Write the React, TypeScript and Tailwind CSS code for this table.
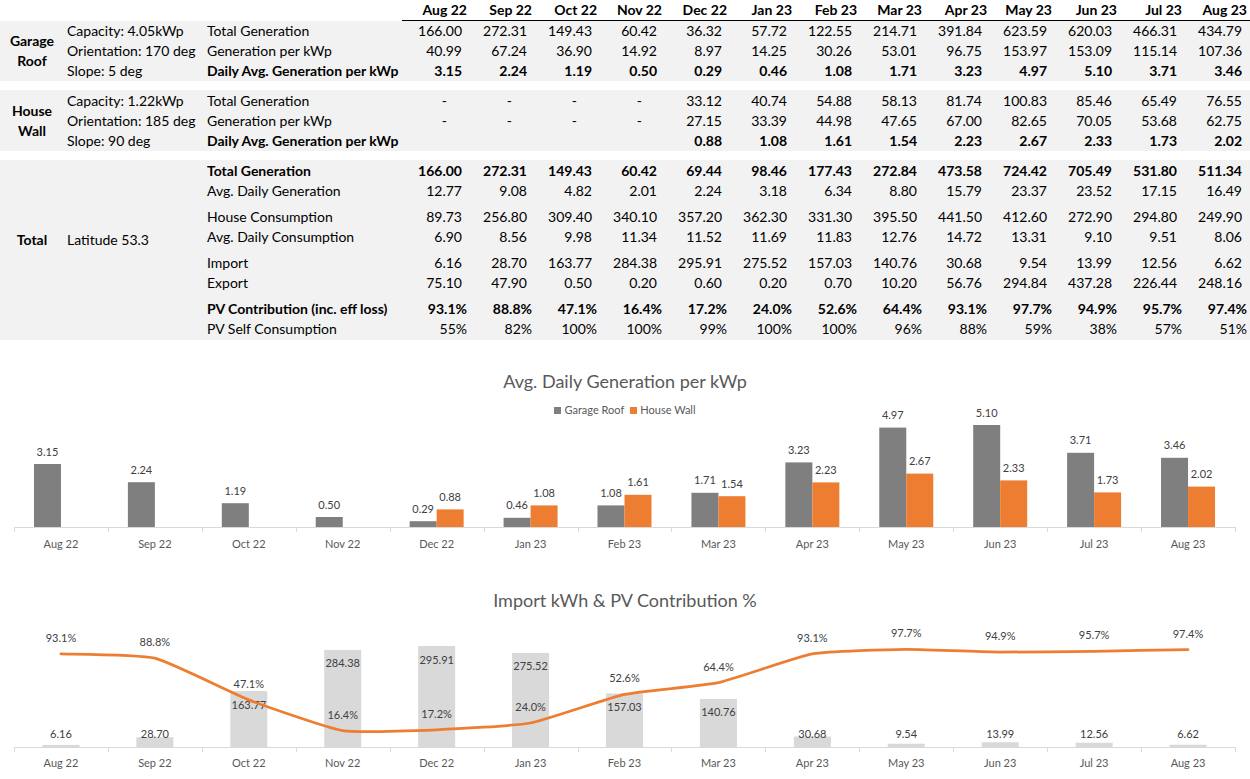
import React from 'react'

const MONTHS = ['Aug 22', 'Sep 22', 'Oct 22', 'Nov 22', 'Dec 22', 'Jan 23', 'Feb 23', 'Mar 23', 'Apr 23', 'May 23', 'Jun 23', 'Jul 23', 'Aug 23']

type Row = { label: string; values: string[]; bold?: boolean; pct?: boolean }

const GARAGE: Row[] = [
  { label: 'Total Generation', values: ['166.00', '272.31', '149.43', '60.42', '36.32', '57.72', '122.55', '214.71', '391.84', '623.59', '620.03', '466.31', '434.79'] },
  { label: 'Generation per kWp', values: ['40.99', '67.24', '36.90', '14.92', '8.97', '14.25', '30.26', '53.01', '96.75', '153.97', '153.09', '115.14', '107.36'] },
  { label: 'Daily Avg. Generation per kWp', bold: true, values: ['3.15', '2.24', '1.19', '0.50', '0.29', '0.46', '1.08', '1.71', '3.23', '4.97', '5.10', '3.71', '3.46'] },
]

const HOUSE: Row[] = [
  { label: 'Total Generation', values: ['-', '-', '-', '-', '33.12', '40.74', '54.88', '58.13', '81.74', '100.83', '85.46', '65.49', '76.55'] },
  { label: 'Generation per kWp', values: ['-', '-', '-', '-', '27.15', '33.39', '44.98', '47.65', '67.00', '82.65', '70.05', '53.68', '62.75'] },
  { label: 'Daily Avg. Generation per kWp', bold: true, values: ['', '', '', '', '0.88', '1.08', '1.61', '1.54', '2.23', '2.67', '2.33', '1.73', '2.02'] },
]

// total block is shown as pairs of rows with a small gap between each pair
const TOTAL: Row[][] = [
  [
    { label: 'Total Generation', bold: true, values: ['166.00', '272.31', '149.43', '60.42', '69.44', '98.46', '177.43', '272.84', '473.58', '724.42', '705.49', '531.80', '511.34'] },
    { label: 'Avg. Daily Generation', values: ['12.77', '9.08', '4.82', '2.01', '2.24', '3.18', '6.34', '8.80', '15.79', '23.37', '23.52', '17.15', '16.49'] },
  ],
  [
    { label: 'House Consumption', values: ['89.73', '256.80', '309.40', '340.10', '357.20', '362.30', '331.30', '395.50', '441.50', '412.60', '272.90', '294.80', '249.90'] },
    { label: 'Avg. Daily Consumption', values: ['6.90', '8.56', '9.98', '11.34', '11.52', '11.69', '11.83', '12.76', '14.72', '13.31', '9.10', '9.51', '8.06'] },
  ],
  [
    { label: 'Import', values: ['6.16', '28.70', '163.77', '284.38', '295.91', '275.52', '157.03', '140.76', '30.68', '9.54', '13.99', '12.56', '6.62'] },
    { label: 'Export', values: ['75.10', '47.90', '0.50', '0.20', '0.60', '0.20', '0.70', '10.20', '56.76', '294.84', '437.28', '226.44', '248.16'] },
  ],
  [
    { label: 'PV Contribution (inc. eff loss)', bold: true, pct: true, values: ['93.1%', '88.8%', '47.1%', '16.4%', '17.2%', '24.0%', '52.6%', '64.4%', '93.1%', '97.7%', '94.9%', '95.7%', '97.4%'] },
    { label: 'PV Self Consumption', pct: true, values: ['55%', '82%', '100%', '100%', '99%', '100%', '100%', '96%', '88%', '59%', '38%', '57%', '51%'] },
  ],
]

const GARAGE_DAILY = [3.15, 2.24, 1.19, 0.5, 0.29, 0.46, 1.08, 1.71, 3.23, 4.97, 5.1, 3.71, 3.46]
const HOUSE_DAILY: (number | null)[] = [null, null, null, null, 0.88, 1.08, 1.61, 1.54, 2.23, 2.67, 2.33, 1.73, 2.02]
const IMPORT = [6.16, 28.7, 163.77, 284.38, 295.91, 275.52, 157.03, 140.76, 30.68, 9.54, 13.99, 12.56, 6.62]
const PV_CONTRIB = [93.1, 88.8, 47.1, 16.4, 17.2, 24.0, 52.6, 64.4, 93.1, 97.7, 94.9, 95.7, 97.4]

const STEP = 1221 / 13
const cx = (i: number) => 14 + STEP * i + STEP / 2

function DataRow({ row }: { row: Row }) {
  return (
    <div className={`flex h-[20px] items-center leading-[20px] ${row.bold ? 'font-bold' : ''}`}>
      <div className="w-[197px] shrink-0 pl-[2px] whitespace-nowrap">{row.label}</div>
      {row.values.map((v, i) => (
        <div
          key={i}
          className={`w-[65px] shrink-0 text-right ${v === '-' ? 'pr-[20px]' : row.pct ? 'pr-0' : 'pr-[5px]'}`}
        >
          {v}
        </div>
      ))}
    </div>
  )
}

function PanelSection({ name, specs, rows }: { name: string[]; specs: string[]; rows: Row[] }) {
  return (
    <div className="flex bg-[#f2f2f2]">
      <div className="w-[64px] shrink-0 flex flex-col items-center justify-center font-bold leading-[20px]">
        {name.map(n => <span key={n}>{n}</span>)}
      </div>
      <div className="w-[141px] shrink-0 pl-[3px] leading-[20px]">
        {specs.map(s => <div key={s} className="h-[20px] whitespace-nowrap">{s}</div>)}
      </div>
      <div>
        {rows.map(r => <DataRow key={r.label} row={r} />)}
      </div>
    </div>
  )
}

function smoothPath(pts: [number, number][], t = 0.08) {
  let d = `M ${pts[0][0]} ${pts[0][1]}`
  for (let i = 0; i < pts.length - 1; i++) {
    const p0 = pts[i - 1] ?? pts[i]
    const p1 = pts[i]
    const p2 = pts[i + 1]
    const p3 = pts[i + 2] ?? p2
    const c1x = p1[0] + (p2[0] - p0[0]) * t
    const c1y = p1[1] + (p2[1] - p0[1]) * t
    const c2x = p2[0] - (p3[0] - p1[0]) * t
    const c2y = p2[1] - (p3[1] - p1[1]) * t
    d += ` C ${c1x} ${c1y}, ${c2x} ${c2y}, ${p2[0]} ${p2[1]}`
  }
  return d
}

function Axis({ base, labelY }: { base: number; labelY: number }) {
  return (
    <g>
      <line x1={14} x2={1235} y1={base + 0.5} y2={base + 0.5} stroke="#d9d9d9" strokeWidth={1} />
      {Array.from({ length: 14 }).map((_, i) => {
        const x = Math.round(14 + STEP * i) + 0.5
        return <line key={i} x1={x} x2={x} y1={base} y2={base + 5} stroke="#d9d9d9" strokeWidth={1} />
      })}
      {MONTHS.map((m, i) => (
        <text key={m} x={cx(i)} y={labelY} textAnchor="middle" dominantBaseline="central" fontSize={11} fill="#595959">
          {m}
        </text>
      ))}
    </g>
  )
}

function GenerationChart() {
  const base = 109
  return (
    <div>
      <div className="mt-[29px] text-center text-[18px] leading-[24px] text-[#595959]">Avg. Daily Generation per kWp</div>
      <div className="mt-[10px] flex h-[14px] items-center justify-center gap-[6px] text-[11px] leading-[14px] text-[#595959]">
        <span className="flex items-center gap-[3px]">
          <span className="inline-block h-[7px] w-[7px] bg-[#7f7f7f]" />
          Garage Roof
        </span>
        <span className="flex items-center gap-[3px]">
          <span className="inline-block h-[7px] w-[7px] bg-[#ed7d31]" />
          House Wall
        </span>
      </div>
      <svg width={1250} height={140} className="mt-px block overflow-visible">
        {GARAGE_DAILY.map((v, i) => {
          const h = v * 20
          const x = cx(i)
          return (
            <g key={i}>
              <rect x={x - 27} y={base - h} width={27} height={h} fill="#7f7f7f" />
              <text x={x - 13.5} y={base - h - 13} textAnchor="middle" dominantBaseline="central" fontSize={11} fill="#404040">
                {v.toFixed(2)}
              </text>
            </g>
          )
        })}
        {HOUSE_DAILY.map((v, i) => {
          if (v === null) return null
          const h = v * 20
          const x = cx(i)
          return (
            <g key={i}>
              <rect x={x} y={base - h} width={27} height={h} fill="#ed7d31" />
              <text x={x + 13.5} y={base - h - 13} textAnchor="middle" dominantBaseline="central" fontSize={11} fill="#404040">
                {v.toFixed(2)}
              </text>
            </g>
          )
        })}
        <Axis base={base} labelY={125} />
      </svg>
    </div>
  )
}

function ImportChart() {
  const base = 135
  const pts: [number, number][] = PV_CONTRIB.map((p, i) => [cx(i), base - p])
  return (
    <div>
      <div className="mt-[30px] text-center text-[18px] leading-[24px] text-[#595959]">Import kWh &amp; PV Contribution %</div>
      <svg width={1250} height={167} className="block overflow-visible">
        {IMPORT.map((v, i) => {
          const h = v * 0.3413
          const top = base - h
          const x = cx(i)
          return (
            <g key={i}>
              <rect x={x - 18.5} y={top} width={37} height={h} fill="#d9d9d9" />
              <text x={x} y={Math.min(top + 13, base - 14)} textAnchor="middle" dominantBaseline="central" fontSize={11} fill="#404040">
                {v.toFixed(2)}
              </text>
            </g>
          )
        })}
        <Axis base={base} labelY={150} />
        <path d={smoothPath(pts)} fill="none" stroke="#ed7d31" strokeWidth={2.75} strokeLinecap="round" strokeLinejoin="round" />
        {PV_CONTRIB.map((p, i) => (
          <text key={i} x={cx(i)} y={base - p - 16.5} textAnchor="middle" dominantBaseline="central" fontSize={11} fill="#404040">
            {p.toFixed(1)}%
          </text>
        ))}
      </svg>
    </div>
  )
}

export default function App() {
  return (
    <div className="w-[1250px] h-[779px] overflow-hidden bg-white text-[14px] text-black [font-family:Lato,'Open_Sans',sans-serif]">
      {/* month header */}
      <div className="flex h-[21px] font-bold leading-[20px]">
        <div className="w-[402px] shrink-0" />
        <div className="flex border-b border-black pr-[3px]">
          {MONTHS.map(m => (
            <div key={m} className="w-[65px] shrink-0 text-right">{m}</div>
          ))}
        </div>
      </div>

      <PanelSection
        name={['Garage', 'Roof']}
        specs={['Capacity: 4.05kWp', 'Orientation: 170 deg', 'Slope: 5 deg']}
        rows={GARAGE}
      />

      <div className="mt-[9px] pt-px bg-[#f2f2f2]">
        <PanelSection
          name={['House', 'Wall']}
          specs={['Capacity: 1.22kWp', 'Orientation: 185 deg', 'Slope: 90 deg']}
          rows={HOUSE}
        />
      </div>

      {/* totals */}
      <div className="mt-[9px] flex h-[180px] bg-[#f2f2f2] pt-px">
        <div className="w-[64px] shrink-0 pt-[69px] text-center font-bold leading-[20px]">Total</div>
        <div className="w-[141px] shrink-0 pl-[3px] pt-[69px] leading-[20px]">Latitude 53.3</div>
        <div className="flex flex-col gap-[6px]">
          {TOTAL.map((pair, i) => (
            <div key={i}>
              {pair.map(r => <DataRow key={r.label} row={r} />)}
            </div>
          ))}
        </div>
      </div>

      <GenerationChart />
      <ImportChart />
    </div>
  )
}
